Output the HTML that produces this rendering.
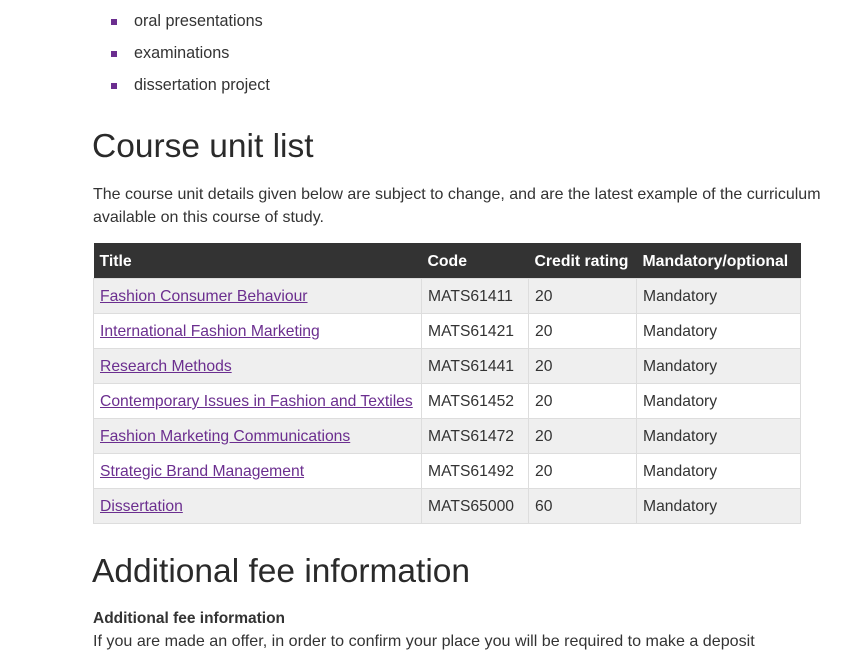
<!DOCTYPE html>
<html><head><meta charset="utf-8"><style>
*{margin:0;padding:0;box-sizing:border-box}
body{width:865px;height:651px;overflow:hidden;background:#fff;font-family:"Liberation Sans",sans-serif;color:#333;position:relative}
.a{position:absolute;white-space:nowrap}
.li{font-size:16.2px;color:#333}
.li:before{content:"";position:absolute;left:-23px;top:7px;width:6px;height:6px;background:#6b2e8f}
h1{font-weight:300;font-size:33.5px;color:#2a2a2a;position:absolute;white-space:nowrap}
table{position:absolute;left:93px;top:243px;width:708px;border-collapse:collapse;font-size:15.7px}
th{background:#333;color:#fff;text-align:left;font-weight:bold;height:35px;padding:3px 6px 0;font-size:15.8px}
td{height:35px;padding:3px 6px 0;border:1px solid #ddd;color:#333}
tr.g td{background:#efefef}
td a{color:#6b2e8f;text-decoration:underline}
</style></head><body>
<div class="a li" style="left:134px;top:12px">oral presentations</div>
<div class="a li" style="left:134px;top:44px">examinations</div>
<div class="a li" style="left:134px;top:76px">dissertation project</div>
<h1 style="left:92px;top:128px">Course unit list</h1>
<div class="a" style="left:93px;top:183px;font-size:16px;line-height:23px;width:760px;white-space:normal">The course unit details given below are subject to change, and are the latest example of the curriculum available on this course of study.</div>
<table>
<tr><th style="width:328px">Title</th><th style="width:107px">Code</th><th style="width:108px">Credit rating</th><th>Mandatory/optional</th></tr>
<tr class="g"><td><a>Fashion Consumer Behaviour</a></td><td>MATS61411</td><td>20</td><td>Mandatory</td></tr>
<tr><td><a>International Fashion Marketing</a></td><td>MATS61421</td><td>20</td><td>Mandatory</td></tr>
<tr class="g"><td><a>Research Methods</a></td><td>MATS61441</td><td>20</td><td>Mandatory</td></tr>
<tr><td><a>Contemporary Issues in Fashion and Textiles</a></td><td>MATS61452</td><td>20</td><td>Mandatory</td></tr>
<tr class="g"><td><a>Fashion Marketing Communications</a></td><td>MATS61472</td><td>20</td><td>Mandatory</td></tr>
<tr><td><a>Strategic Brand Management</a></td><td>MATS61492</td><td>20</td><td>Mandatory</td></tr>
<tr class="g"><td><a>Dissertation</a></td><td>MATS65000</td><td>60</td><td>Mandatory</td></tr>
</table>
<h1 style="left:92px;top:553px">Additional fee information</h1>
<div class="a" style="left:93px;top:610px;font-size:15.5px;font-weight:bold;color:#333">Additional fee information</div>
<div class="a" style="left:93px;top:632px;font-size:16.1px">If you are made an offer, in order to confirm your place you will be required to make a deposit</div>
</body></html>
